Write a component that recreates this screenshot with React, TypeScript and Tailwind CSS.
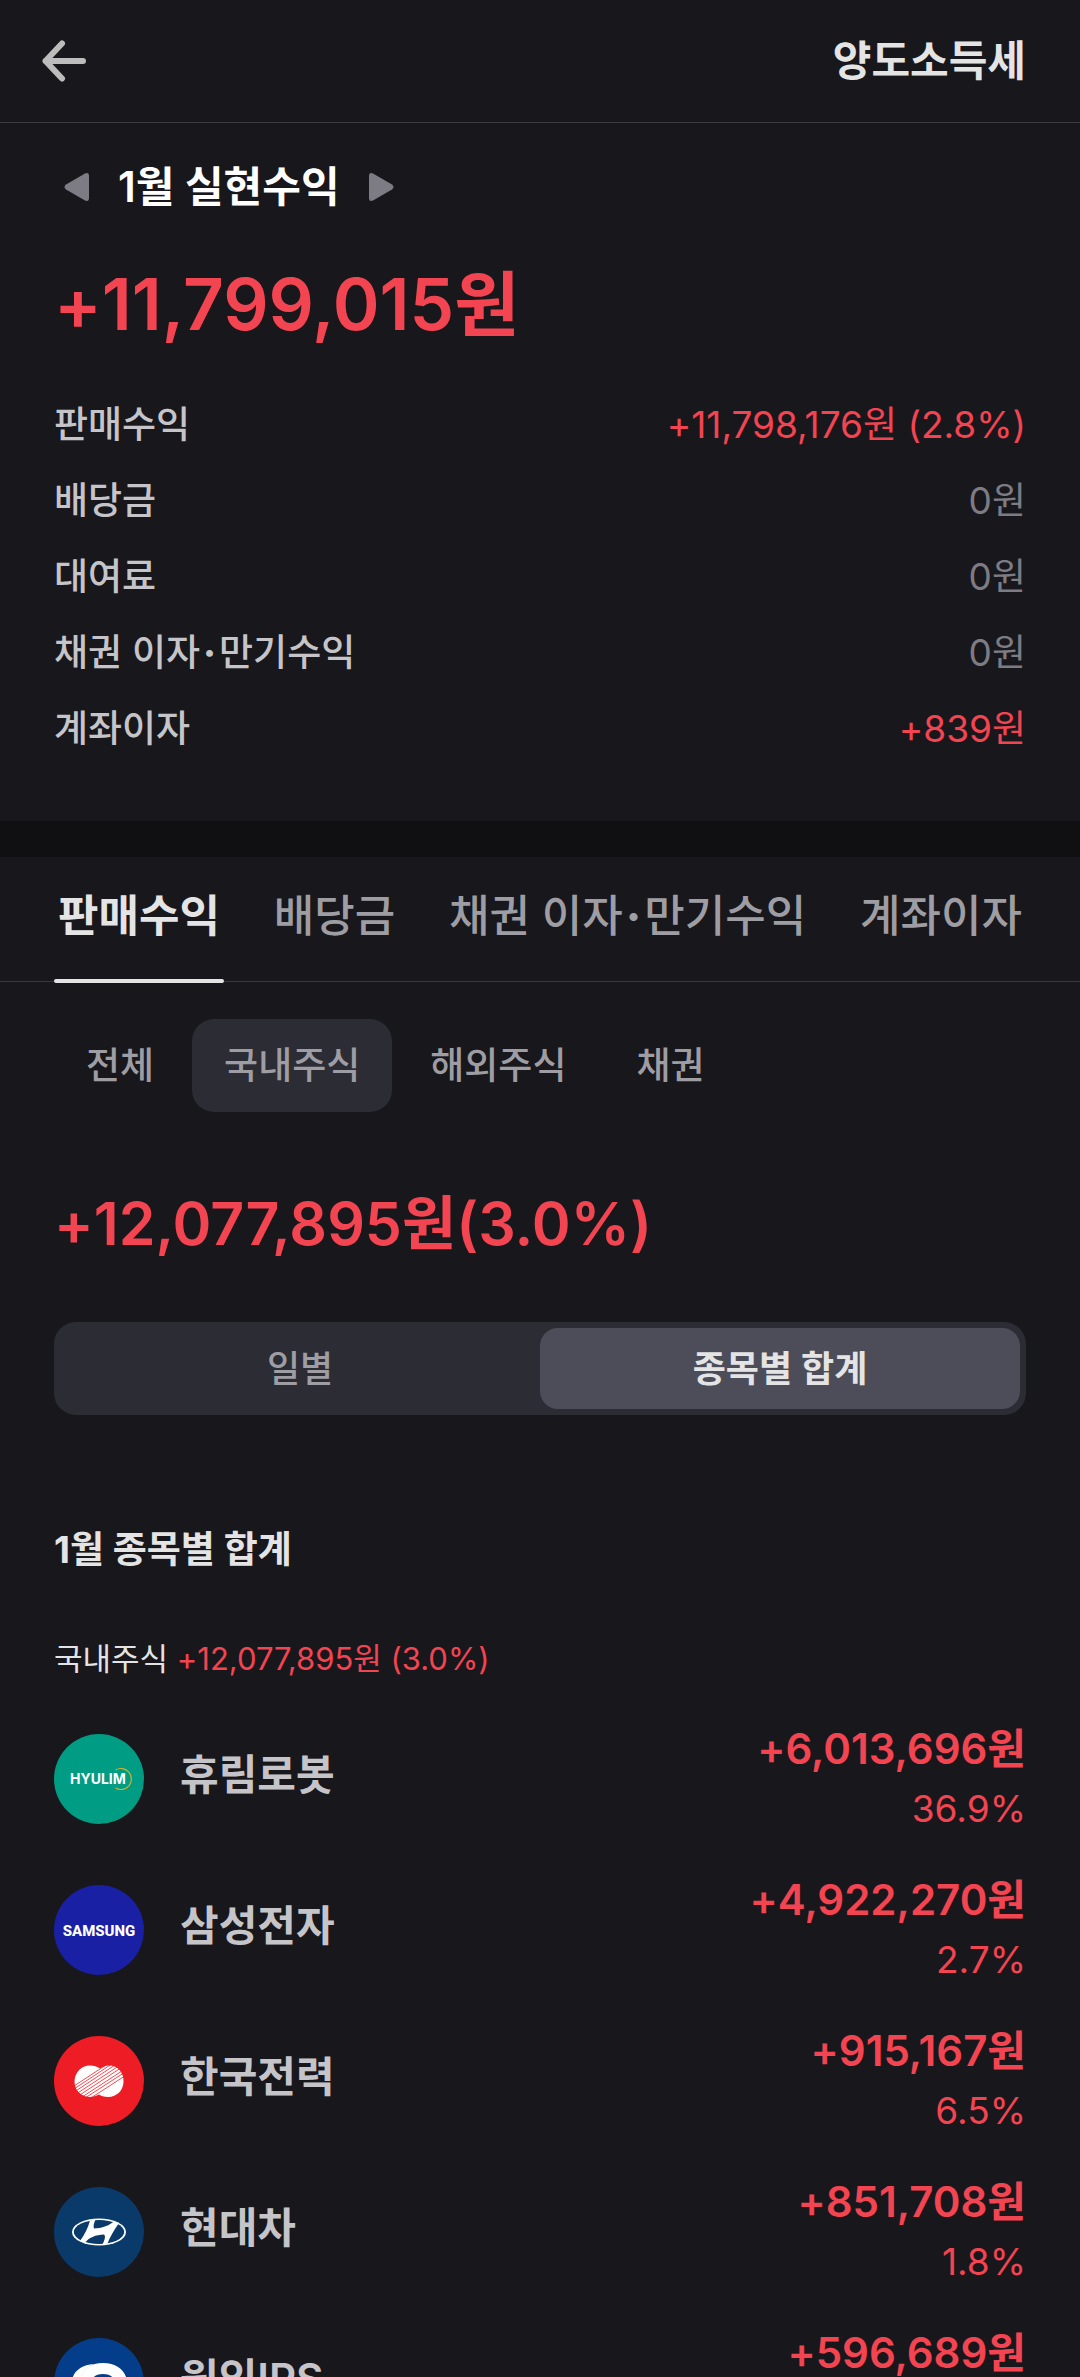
import { useState } from 'react';
import type { ReactNode } from 'react';
import clsx from 'clsx';

const summary = [
  { label: '판매수익', value: '+11,798,176원 (2.8%)', up: true },
  { label: '배당금', value: '0원', up: false },
  { label: '대여료', value: '0원', up: false },
  { label: '채권 이자·만기수익', value: '0원', up: false },
  { label: '계좌이자', value: '+839원', up: true },
];

const tabs = ['판매수익', '배당금', '채권 이자·만기수익', '계좌이자'];
const filters = ['전체', '국내주식', '해외주식', '채권'];
const views = ['일별', '종목별 합계'];

// Gives the middle dot some room between the syllables
function Label({ text }: { text: string }) {
  const [head, tail] = text.split('·');
  if (!tail) return <>{head}</>;
  return (
    <>
      {head}
      <span className="mx-[3px] font-extrabold">·</span>
      {tail}
    </>
  );
}

function HyulimLogo() {
  return (
    <svg viewBox="0 0 90 90" className="size-full">
      <rect width="90" height="90" fill="#019c84" />
      <path d="M61.500 36A10.500 10.500 0 1 1 61.500 54" fill="none" stroke="#c9b22e" strokeWidth="1.200" />
      <text x="16" y="50" fontSize="14" fontWeight="700" fill="#fff" fontFamily="Inter, sans-serif">HYULIM</text>
    </svg>
  );
}

function SamsungLogo() {
  return (
    <svg viewBox="0 0 90 90" className="size-full">
      <rect width="90" height="90" fill="#1a20a4" />
      <text x="45" y="51" textAnchor="middle" fontSize="15" fontWeight="800" fill="#fff" fontFamily="Roboto, sans-serif">SAMSUNG</text>
    </svg>
  );
}

function KepcoLogo() {
  return (
    <svg viewBox="0 0 90 90" className="size-full">
      <rect width="90" height="90" fill="#ee1c25" />
      <path
        d="M36 29.500C40 29.500 43 30.500 46 32.500C49 30.500 52 29.500 55 29.500C64 29.500 70 37 69.500 45.500C69.500 54 63 61 54 61C50 61 47 60 45 58.500C42 60 39 61 36 61C27 61 20.500 54 20.500 45.500C20.500 37 27 29.500 36 29.500Z"
        fill="#fff"
      />
      <g stroke="#ee1c25" strokeWidth="0.8">
        <path d="M20 50L52 29" />
        <path d="M20 53L57 28.500" />
        <path d="M21 55.500L61 29" />
        <path d="M23 57.500L64 30.500" />
        <path d="M25 59.500L66 32.500" />
        <path d="M28 61L68 35" />
        <path d="M31 62L69 37.500" />
        <path d="M36 62.500L70 40.500" />
      </g>
    </svg>
  );
}

function HyundaiLogo() {
  return (
    <svg viewBox="0 0 90 90" className="size-full">
      <rect width="90" height="90" fill="#0a3a69" />
      <ellipse cx="45" cy="45" rx="27" ry="13.500" fill="#fff" />
      <ellipse cx="45" cy="45" rx="25.200" ry="11.900" fill="#0a3a69" />
      <path
        d="M36 33.500L41.500 32.500C40 36 39 39 40 41.500C47 41.500 57 38 60 34L65 36C60 43 56 50 53.500 56.500L48.500 57.500C50.500 53.500 52 49.500 50 47.500C42 47.500 34 51 31 56L26 54C30.500 48 34 41 36 33.500Z"
        fill="#fff"
      />
    </svg>
  );
}

function WonikLogo() {
  return (
    <svg viewBox="0 0 90 90" className="size-full">
      <rect width="90" height="90" fill="#043e8a" />
      <path d="M40 26C26 27 17 35 18 46C19 54 25 60 34 62C22 50 24 33 40 26Z" fill="#fff" />
      <path
        fillRule="evenodd"
        d="M49 25C64 25 73 34 73 45C73 56 64 64 49 64C34 64 26 56 26 45C26 34 34 25 49 25ZM49 36C41 36 37 40 37 46C37 52 41 56 49 56C57 56 61 52 61 46C61 40 57 36 49 36Z"
        fill="#fff"
      />
    </svg>
  );
}

type Stock = { name: string; amount: string; rate: string; logo: ReactNode };

const stocks: Stock[] = [
  { name: '휴림로봇', amount: '+6,013,696원', rate: '36.9%', logo: <HyulimLogo /> },
  { name: '삼성전자', amount: '+4,922,270원', rate: '2.7%', logo: <SamsungLogo /> },
  { name: '한국전력', amount: '+915,167원', rate: '6.5%', logo: <KepcoLogo /> },
  { name: '현대차', amount: '+851,708원', rate: '1.8%', logo: <HyundaiLogo /> },
  { name: '원익IPS', amount: '+596,689원', rate: '', logo: <WonikLogo /> },
];

export default function App() {
  const [tab, setTab] = useState(tabs[0]);
  const [filter, setFilter] = useState(filters[1]);
  const [view, setView] = useState(views[1]);

  return (
    <div className="h-screen overflow-hidden bg-[#18171c] text-[#c5c4c9] font-[Inter,'Noto_Sans_CJK_KR',sans-serif]">
      <header className="flex h-[123px] items-center justify-between border-b border-[#3c3c41] pl-[42px] pr-[54px]">
        <button aria-label="뒤로">
          <svg width="44" height="42" viewBox="0 0 44 42" fill="none" stroke="#bcbcbc" strokeWidth="6" strokeLinecap="round" strokeLinejoin="round">
            <path d="M20 3.500L3.500 21L20 38.500M3.500 21H41" />
          </svg>
        </button>
        <button className="text-[42px] leading-[60px] font-semibold text-[#e4e4e5]">양도소득세</button>
      </header>

      <section className="px-[54px] pt-[34px] pb-[54px]">
        <div className="flex items-center gap-7 pl-2.5">
          <button aria-label="이전 달">
            <svg width="26" height="30" viewBox="0 0 26 30" fill="#7d7c84">
              <path d="M2 12.500L21 1.500Q25 0 25 4V26Q25 30 21 28.500L2 17.500Q-1 15 2 12.500Z" />
            </svg>
          </button>
          <h1 className="text-[42px] leading-[60px] font-semibold text-white">1월 실현수익</h1>
          <button aria-label="다음 달">
            <svg width="26" height="30" viewBox="0 0 26 30" fill="#7d7c84">
              <path d="M24 12.500L5 1.500Q1 0 1 4V26Q1 30 5 28.500L24 17.500Q27 15 24 12.500Z" />
            </svg>
          </button>
        </div>
        <p className="mt-[34px] text-[71px] leading-[106px] font-semibold text-[#f34451]">+11,799,015원</p>
        <dl className="mt-[30px]">
          {summary.map((row) => (
            <div key={row.label} className="flex h-[76px] items-center justify-between">
              <dt className="text-[37px] leading-[54px] font-medium">
                <Label text={row.label} />
              </dt>
              <dd className={clsx('text-[37px] leading-[54px]', row.up ? 'text-[#f34451]' : 'text-[#7d7c84]')}>{row.value}</dd>
            </div>
          ))}
        </dl>
      </section>

      <div className="h-9 bg-[#101012]" />

      <nav className="flex h-[125px] justify-between border-b border-[#37373c] px-[54px]">
        {tabs.map((t) => (
          <button
            key={t}
            onClick={() => setTab(t)}
            className={clsx(
              'relative px-1 pb-1.5 text-[44px] leading-[64px]',
              t === tab ? 'font-bold text-[#e4e4e5]' : 'font-medium text-[#9e9da3]',
            )}
          >
            <Label text={t} />
            {t === tab && <span className="absolute inset-x-0 -bottom-0.5 h-1 rounded-full bg-[#e4e4e5]" />}
          </button>
        ))}
      </nav>

      <main className="px-[54px] pt-[37px]">
        <div className="flex gap-1.5">
          {filters.map((f) => (
            <button
              key={f}
              onClick={() => setFilter(f)}
              className={clsx('h-[93px] rounded-[22px] px-8 text-[37px] font-medium text-[#9e9da3]', f === filter && 'bg-[#2c2c35]')}
            >
              {f}
            </button>
          ))}
        </div>

        <p className="mt-[64px] text-[59px] leading-[96px] font-semibold text-[#f34451]">+12,077,895원(3.0%)</p>

        <div className="mt-[50px] grid h-[93px] grid-cols-2 rounded-[22px] bg-[#2c2c35] p-1.5">
          {views.map((v) => (
            <button
              key={v}
              onClick={() => setView(v)}
              className={clsx('rounded-[18px] text-[36px]', v === view ? 'bg-[#4d4d59] font-semibold text-[#e4e4e5]' : 'font-medium text-[#9e9da3]')}
            >
              {v}
            </button>
          ))}
        </div>

        <h2 className="mt-[108px] text-[37px] leading-[54px] font-bold text-[#e4e4e5]">1월 종목별 합계</h2>
        <p className="mt-[58px] text-[31px] leading-[48px] text-[#e4e4e5]">
          국내주식 <span className="text-[#f34451]">+12,077,895원 (3.0%)</span>
        </p>

        <ul className="mt-5">
          {stocks.map((s) => (
            <li key={s.name} className="flex h-[151px] items-center">
              <div className="size-[90px] shrink-0 overflow-hidden rounded-full">{s.logo}</div>
              <span className="ml-9 pb-2 text-[42px] leading-[60px] font-semibold">{s.name}</span>
              <div className="ml-auto text-right text-[#f34451]">
                <p className="text-[42px] leading-[60px] font-semibold">{s.amount}</p>
                <p className="h-[60px] text-[37px] leading-[60px]">{s.rate}</p>
              </div>
            </li>
          ))}
        </ul>
      </main>
    </div>
  );
}
